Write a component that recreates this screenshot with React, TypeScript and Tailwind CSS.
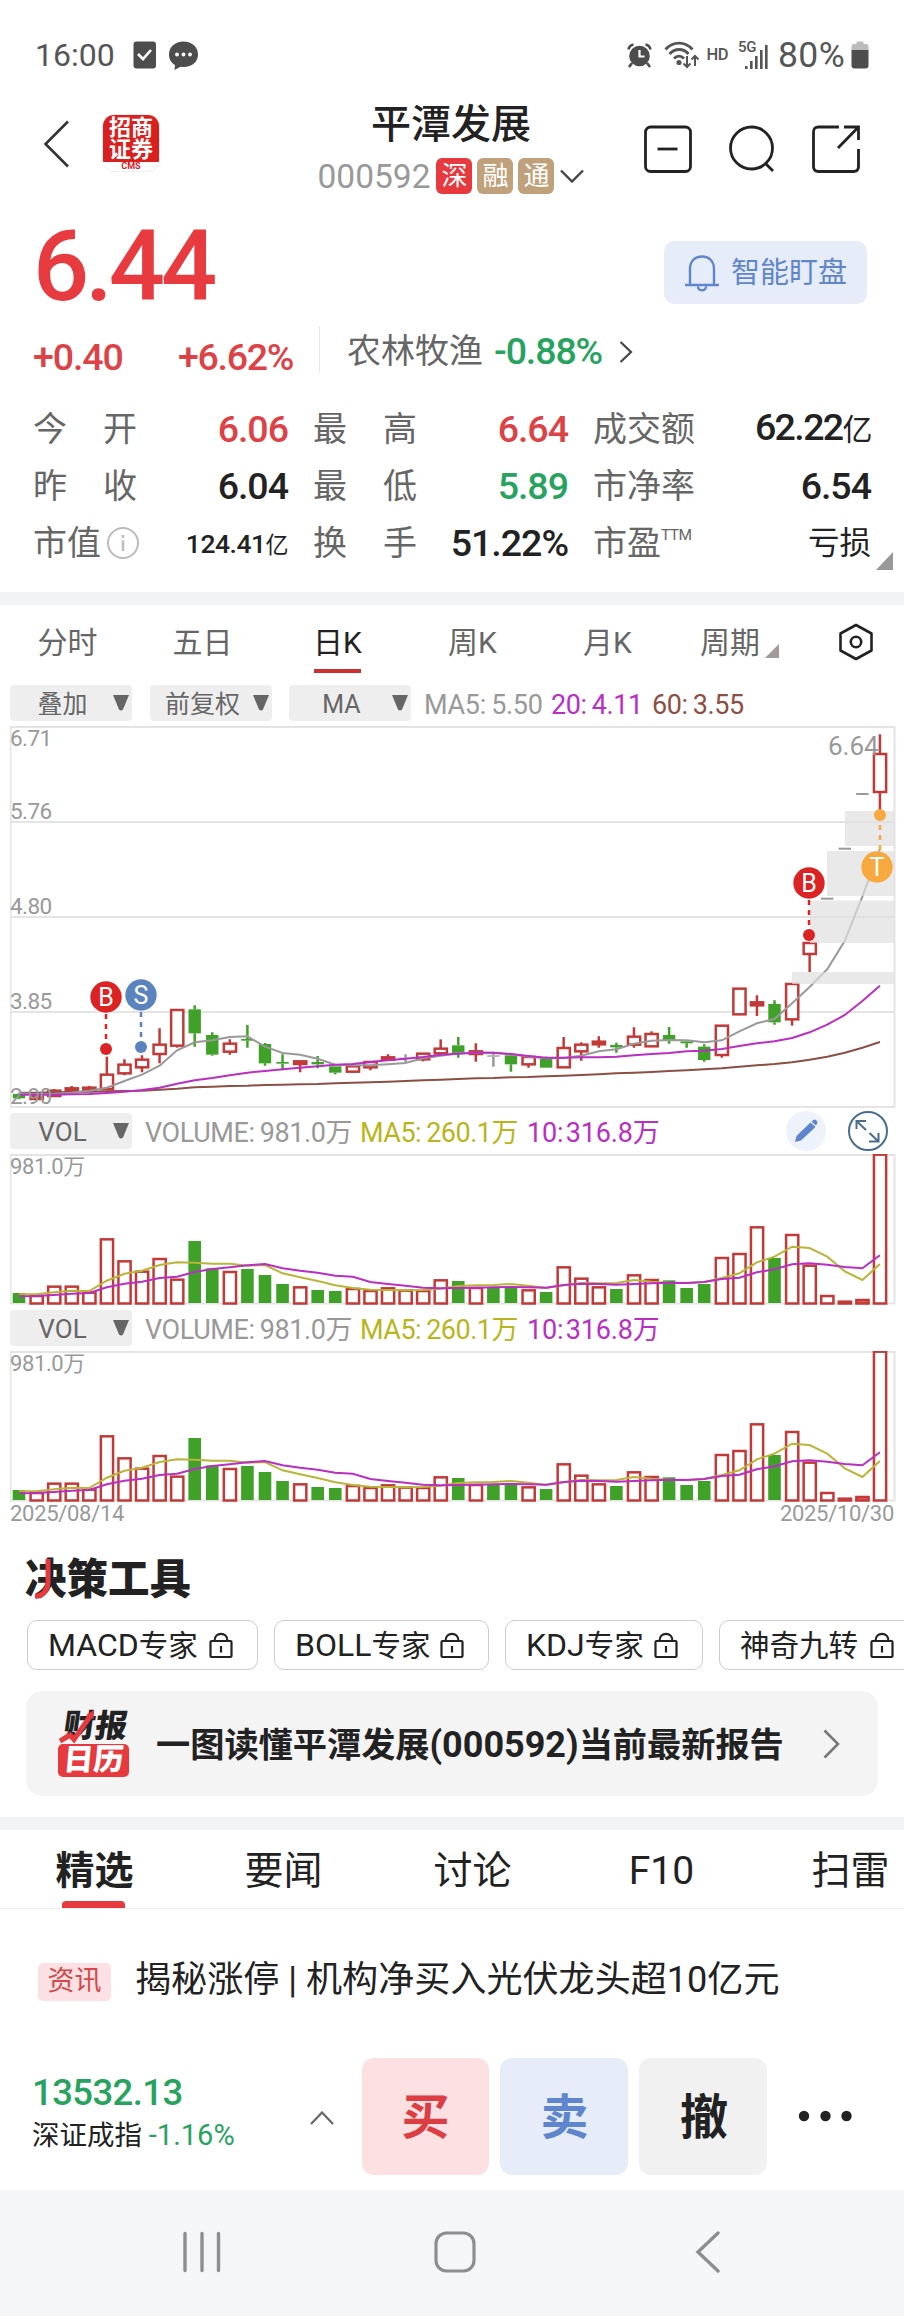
import type { ReactNode } from 'react';

type Kind = 'up' | 'down' | 'flat';

// kind, high, body top, body bottom, low: y offsets inside the K-line pane, in thirds of a pixel
const CANDLES: [Kind, number, number, number, number][] = [
  ['down', 1120, 1122, 1135, 1138],
  ['up', 1128, 1129, 1137, 1138],
  ['up', 1107, 1112, 1128, 1128],
  ['up', 1098, 1105, 1116, 1117],
  ['up', 1098, 1103, 1112, 1113],
  ['up', 1010, 1064, 1107, 1107],
  ['up', 1018, 1034, 1060, 1066],
  ['up', 1006, 1019, 1042, 1057],
  ['up', 925, 974, 1002, 1030],
  ['up', 870, 870, 977, 983],
  ['down', 856, 868, 940, 980],
  ['down', 937, 945, 1004, 1007],
  ['up', 958, 971, 995, 1004],
  ['down', 915, 957, 962, 983],
  ['down', 969, 972, 1030, 1037],
  ['down', 1003, 1026, 1031, 1051],
  ['up', 1022, 1024, 1032, 1057],
  ['down', 1008, 1026, 1033, 1045],
  ['down', 1039, 1039, 1058, 1063],
  ['up', 1038, 1039, 1055, 1058],
  ['up', 1025, 1026, 1042, 1051],
  ['up', 1003, 1012, 1019, 1022],
  ['flat', 1003, 1013, 1017, 1026],
  ['up', 1001, 1001, 1018, 1024],
  ['up', 958, 986, 1000, 1000],
  ['down', 951, 976, 1000, 1013],
  ['up', 970, 994, 1002, 1025],
  ['flat', 1000, 1006, 1010, 1040],
  ['down', 1003, 1006, 1033, 1055],
  ['up', 1010, 1011, 1033, 1043],
  ['down', 1010, 1016, 1043, 1043],
  ['up', 951, 984, 1042, 1042],
  ['up', 967, 974, 994, 1022],
  ['up', 949, 965, 973, 983],
  ['down', 968, 975, 982, 998],
  ['up', 922, 950, 974, 983],
  ['up', 934, 942, 979, 979],
  ['down', 921, 945, 961, 971],
  ['down', 960, 964, 970, 983],
  ['down', 973, 980, 1020, 1025],
  ['up', 917, 917, 1005, 1013],
  ['up', 806, 806, 883, 883],
  ['up', 826, 847, 856, 888],
  ['down', 841, 852, 907, 914],
  ['up', 792, 792, 898, 917],
  ['up', 669, 669, 702, 756],
  ['flat', 533, 533, 539, 539],
  ['flat', 383, 383, 389, 389],
  ['flat', 219, 219, 225, 225],
  ['up', 43, 102, 216, 270],
];

const MA5 = [
  1120, 1122, 1121, 1118, 1112, 1103, 1083, 1064, 1037, 991, 967, 961, 951, 949, 980, 999, 1004, 1016, 1034, 1036,
  1036, 1033, 1029, 1015, 1007, 1000, 998, 998, 1003, 1010, 1015, 1014, 1007, 994, 988, 971, 962, 960, 961, 967,
  961, 934, 910, 897, 850, 801, 748, 662, 530, 387,
];
const MA20 = [
  1124, 1124, 1124, 1123, 1122, 1119, 1115, 1110, 1103, 1091, 1081, 1074, 1066, 1058, 1053, 1048, 1043, 1039, 1034, 1032,
  1026, 1021, 1016, 1011, 1004, 1001, 998, 998, 1002, 1008, 1013, 1013, 1012, 1012, 1010, 1006, 1002, 999, 994, 992,
  987, 978, 970, 964, 954, 937, 914, 885, 843, 797,
];
const MA60 = [
  1118, 1118, 1117, 1116, 1115, 1114, 1113, 1112, 1109, 1106, 1102, 1100, 1098, 1097, 1095, 1094, 1093, 1092, 1090, 1088,
  1087, 1085, 1083, 1081, 1079, 1077, 1075, 1074, 1072, 1071, 1069, 1067, 1065, 1063, 1060, 1058, 1056, 1053, 1051, 1048,
  1045, 1040, 1036, 1032, 1027, 1019, 1010, 998, 983, 966,
];

const VOL_TOPS = [
  579, 588, 560, 560, 578, 418, 484, 515, 477, 539, 423, 505, 516, 507, 525, 552, 562, 570, 573, 567,
  573, 565, 572, 573, 541, 543, 564, 564, 563, 571, 576, 502, 536, 562, 567, 526, 540, 541, 564, 552,
  474, 462, 382, 474, 405, 497, 588, 605, 600, 164,
];
const VOL_MA5 = [
  583, 583, 577, 572, 573, 542, 521, 512, 495, 487, 488, 491, 491, 497, 495, 520, 532, 543, 556, 564,
  569, 570, 571, 570, 566, 558, 556, 555, 552, 557, 564, 556, 549, 550, 549, 540, 545, 548, 549, 546,
  534, 520, 487, 470, 440, 444, 470, 514, 540, 492,
];
const VOL_MA10 = [
  589, 588, 585, 581, 579, 562, 551, 545, 534, 530, 516, 507, 502, 496, 492, 505, 512, 518, 527, 530,
  546, 552, 557, 563, 565, 564, 563, 562, 561, 562, 563, 555, 551, 552, 554, 552, 550, 548, 549, 546,
  537, 533, 517, 508, 493, 490, 494, 501, 505, 466,
];

const RED = '#c23a38';
const GREEN = '#3fa128';
const GRAY = '#999999';
const PURPLE = '#b92fc4';

const cx = (i: number) => 9 + i * 17.57;
const ky = (v: number) => v / 3 - 6;
const vy = (v: number) => v / 3 - 54;

function points(values: number[], y: (v: number) => number) {
  return values.map((v, i) => `${cx(i).toFixed(1)},${y(v).toFixed(1)}`).join(' ');
}

function StatusBar() {
  return (
    <div className="flex h-[88px] items-end pb-3.5 pl-[35px] pr-[35px] text-[32px] text-[#555]">
      <span className="h-[38px] leading-[38px]">16:00</span>
      <svg className="mb-[5px] ml-[18px]" width="24" height="28" viewBox="0 0 24 28">
        <rect x="0.5" y="0.5" width="22.500" height="27" rx="3" fill="#4d4d4d" />
        <path d="M5 13l5 5 8-9" fill="none" stroke="#fff" strokeWidth="2.600" />
      </svg>
      <svg className="mb-[3px] ml-[11px]" width="31" height="30" viewBox="0 0 31 30">
        <path d="M15.500 0.500C7 0.500 1 6 1 13.500c0 5 2.500 8.500 6 10.500l-.5 5 6-3.200 3 .2c8.500 0 14.500-5 14.500-12.500S24 .5 15.500.5z" fill="#4d4d4d" />
        <circle cx="9" cy="13.500" r="1.900" fill="#fff" />
        <circle cx="15.500" cy="13.500" r="1.900" fill="#fff" />
        <circle cx="22" cy="13.500" r="1.900" fill="#fff" />
      </svg>
      <div className="flex-1" />
      <svg className="mb-[6px]" width="25" height="25" viewBox="0 0 25 25">
        <circle cx="12.500" cy="13" r="10.300" fill="#4d4d4d" />
        <path d="M1.500 6.500C2 4 4 2 6.500 1.500M23.500 6.500C23 4 21 2 18.500 1.500M5 20l-3 4M20 20l3 4" stroke="#4d4d4d" strokeWidth="2.600" fill="none" />
        <path d="M12.500 7v6.500h5" stroke="#fff" strokeWidth="2.200" fill="none" />
      </svg>
      <svg className="mb-[5px] ml-3" width="36" height="28" viewBox="0 0 36 28" fill="none" stroke="#555" strokeWidth="2.800">
        <path d="M1.500 8.500C9 0 21 0 28.500 8.500M5.500 13c5.500-6 14-6 19 0M10 17.500c3-3.300 7-3.300 10 0" />
        <circle cx="15" cy="21.500" r="1.200" fill="#555" />
        <path d="M23 15v11M19.500 22.500L23 26l3.500-3.500M31 25V15M27.500 18.500L31 15l3.500 3.500" strokeWidth="2" />
      </svg>
      <span className="mb-[7px] ml-[7px] h-6 text-[16.500px] font-medium leading-6 tracking-[-0.5px]">HD</span>
      <div className="relative ml-[10px] h-[46px] w-[34px]">
        <span className="absolute left-0 top-[9px] text-[15px] font-medium leading-5 tracking-tight">5G</span>
        <svg className="absolute left-[7px] top-[17px]" width="24" height="26" viewBox="0 0 24 26" fill="#555">
          <rect x="0" y="21" width="2.600" height="3" />
          <rect x="5" y="16" width="2.600" height="8" />
          <rect x="10" y="11" width="2.600" height="13" />
          <rect x="15" y="5" width="2.600" height="19" />
          <rect x="20" y="0" width="2.600" height="24" />
        </svg>
      </div>
      <span className="ml-[6px] h-[38px] w-[71px] text-[35.500px] leading-[38px] tracking-[0.4px]">80%</span>
      <svg className="mb-[5px] ml-[2px]" width="18" height="28" viewBox="0 0 18 28">
        <path d="M5.500 3V1.500Q5.500.5 6.500.5h5q1 0 1 1V3h2.500q2.500 0 2.500 2.500V10H.5V5.500Q.5 3 3 3z" fill="#bbb" />
        <path d="M.5 9h17v15.500q0 3-3 3h-11q-3 0-3-3z" fill="#4d4d4d" />
      </svg>
    </div>
  );
}

function Header() {
  return (
    <div className="flex h-[117px] items-start pl-[43px] pr-[44px]">
      <div className="flex w-[274px] pt-[26px]">
        <svg className="mt-1.5" width="27" height="48" viewBox="0 0 27 48" fill="none" stroke="#333" strokeWidth="2.600">
          <path d="M25 1.500L2.500 24 25 46.500" />
        </svg>
        <div className="ml-8 flex h-[58px] w-[58px] flex-col overflow-hidden rounded-xl border border-[#eee] bg-white">
          <div className="h-[47px] bg-[#d9201f] pt-[2px] text-center text-[22px] font-bold leading-[21.500px] text-white">
            招商
            <br />
            证券
          </div>
          <div className="text-center text-[9px] font-bold leading-[9px] text-[#d9201f]">CMS</div>
        </div>
      </div>
      <div className="flex w-[268px] flex-col items-center pt-[14px]">
        <div className="h-[46px] text-[40px] font-medium leading-[46px] text-[#222]">平潭发展</div>
        <div className="mt-[10px] flex h-9 items-center">
          <span className="mr-[6px] mt-[2px] text-[33.500px] leading-9 text-[#999]">000592</span>
          <Tag className="bg-[#e63a3f]">深</Tag>
          <Tag className="ml-[5px] bg-[#bfa27c]">融</Tag>
          <Tag className="ml-[5px] bg-[#bfa27c]">通</Tag>
          <svg className="ml-1.5" width="24" height="14" viewBox="0 0 24 14" fill="none" stroke="#444" strokeWidth="2.400">
            <path d="M1 1.500l11 11 11-11" />
          </svg>
        </div>
      </div>
      <div className="ml-auto flex gap-[36px] pt-[37px]">
        <svg width="48" height="48" viewBox="0 0 48 48" fill="none" stroke="#222" strokeWidth="2.800">
          <rect x="1.500" y="2" width="45" height="44.500" rx="5" />
          <path d="M13.500 24h20" />
        </svg>
        <svg width="48" height="48" viewBox="0 0 48 48" fill="none" stroke="#222" strokeWidth="2.800">
          <circle cx="23.500" cy="23" r="21" />
          <path d="M37 38l8 8" />
        </svg>
        <svg width="48" height="48" viewBox="0 0 48 48" fill="none" stroke="#222" strokeWidth="2.800">
          <path d="M27 2H6.500Q1.500 2 1.500 7v34.500q0 5 5 5h35q5 0 5-5V24M32 2h14.500v13M46 2.500L26 23" />
        </svg>
      </div>
    </div>
  );
}

function Tag({ className, children }: { className: string; children: ReactNode }) {
  return (
    <span className={`flex h-9 w-9 items-center justify-center rounded-md text-[26px] leading-9 text-white ${className}`}>
      {children}
    </span>
  );
}

function Price() {
  return (
    <>
      <div className="flex h-[114px] items-start justify-between pl-[33px] pr-[37px]">
        <div className="pt-[3px] text-[99px] font-medium leading-[116px] tracking-[-4px] text-[#e83b40]">6.44</div>
        <div className="mt-9 flex h-[63px] w-[203px] items-center rounded-[10px] bg-[#e6edf9] pl-[20px] text-[#5f85cc]">
          <svg width="36" height="38" viewBox="0 0 36 38" fill="none" stroke="#5f85cc" strokeWidth="2.400">
            <path d="M6 31V15C6 7 11 2.500 18 2.500S30 7 30 15v16M1 31h34M14 32.500c0 5 8 5 8 0" />
          </svg>
          <span className="ml-[11px] text-[29px] leading-[40px]">智能盯盘</span>
        </div>
      </div>
      <div className="flex h-[80px] items-start pl-[33px] text-[37.500px] leading-[42px]">
        <span className="mt-[17px] w-[145px] font-medium tracking-[-1.1px] text-[#dc4246]">+0.40</span>
        <span className="mt-[17px] w-[141px] font-medium tracking-[-1.3px] text-[#dc4246]">+6.62%</span>
        <span className="mt-[7px] h-[47px] w-px bg-[#eaeaea]" />
        <span className="ml-[27px] mt-[11px] text-[34px] text-[#666]">农林牧渔</span>
        <span className="ml-[11px] mt-[11px] w-[111px] font-medium tracking-[-1.1px] text-[#27a35f]">-0.88%</span>
        <svg className="ml-[14px] mt-[22px]" width="14" height="22" viewBox="0 0 14 22" fill="none" stroke="#444" strokeWidth="2.200">
          <path d="M1.500 1l10.500 10L1.500 21" />
        </svg>
      </div>
    </>
  );
}

function Stat({ label, children, className = '' }: { label: ReactNode; children: ReactNode; className?: string }) {
  return (
    <div className="flex h-[57px] items-center justify-between whitespace-nowrap">
      <span className="flex items-center text-[34px] leading-[50px] text-[#666]">{label}</span>
      <span className={`text-[37.500px] font-medium leading-[50px] tracking-[-1px] ${className}`}>{children}</span>
    </div>
  );
}

const wide = (a: string, b: string) => (
  <>
    <span className="w-[70px]">{a}</span>
    <span>{b}</span>
  </>
);

function Stats() {
  return (
    <div className="relative h-[193px] pl-[33px] pr-[33px] pt-[1px]">
      <div className="grid grid-cols-[255px_255px_278px] gap-x-[25px]">
        <Stat label={wide('今', '开')} className="text-[#dc4246]">6.06</Stat>
        <Stat label={wide('最', '高')} className="text-[#dc4246]">6.64</Stat>
        <Stat label="成交额" className="text-[#222]"><span className="tracking-[-1.600px]">62.22<span className="text-[30px] font-normal">亿</span></span></Stat>
        <Stat label={wide('昨', '收')} className="text-[#222]">6.04</Stat>
        <Stat label={wide('最', '低')} className="text-[#27a35f]">5.89</Stat>
        <Stat label="市净率" className="text-[#222]">6.54</Stat>
        <Stat
          label={
            <>
              市值
              <svg className="ml-[5px]" width="34" height="34" viewBox="0 0 34 34" fill="none" stroke="#bbb" strokeWidth="2">
                <circle cx="17" cy="17" r="15" />
                <path d="M17 14.500V25M17 9v3" strokeWidth="2.400" />
              </svg>
            </>
          }
          className="text-[#222]"
        >
          <span className="text-[26.500px] tracking-[-0.5px]">124.41<span className="text-[23px] font-normal">亿</span></span>
        </Stat>
        <Stat label={wide('换', '手')} className="text-[#222]">51.22%</Stat>
        <Stat label={<>市盈<span className="mb-4 text-[15.500px] leading-4 tracking-[-0.6px]">TTM</span></>} className="text-[#222]">
          <span className="text-[31.500px] font-normal tracking-normal">亏损</span>
        </Stat>
      </div>
      <svg className="absolute right-[11px] top-[153px]" width="17" height="18" viewBox="0 0 17 18">
        <path d="M17 0v18H0z" fill="#999" />
      </svg>
    </div>
  );
}

function PeriodTabs() {
  return (
    <div className="flex h-[79px] text-[30px] leading-[76px] text-[#666]">
      {['分时', '五日', '日K', '周K', '月K'].map((name) => (
        <div key={name} className="relative w-[135px] text-center">
          {name === '日K' ? (
            <>
              <span className="text-[#222]">{name}</span>
              <span className="absolute bottom-[11px] left-[44px] h-1 w-[47px] bg-[#cc3031]" />
            </>
          ) : (
            name
          )}
        </div>
      ))}
      <div className="flex w-[135px] pl-[25px]">
        周期
        <svg className="ml-[5px] mt-[39px]" width="14" height="14" viewBox="0 0 14 14">
          <path d="M14 0v14H0z" fill="#a09a9a" />
        </svg>
      </div>
      <svg className="ml-[28px] mt-[18px]" width="36" height="38" viewBox="0 0 36 38" fill="none" stroke="#222" strokeWidth="2.600">
        <path d="M18 2l15.500 8.500v17L18 36 2.500 27.500v-17z" strokeLinejoin="round" />
        <circle cx="18" cy="19" r="5.200" />
      </svg>
    </div>
  );
}

function Dropdown({ children }: { children: ReactNode }) {
  return (
    <div className="flex h-9 w-[122px] shrink-0 items-center rounded bg-[#eee] text-[25px] leading-9 text-[#666]">
      <span className="flex-1 pl-[2px] pt-[3px] text-center">{children}</span>
      <svg className="mr-[3px]" width="16" height="16" viewBox="0 0 16 16">
        <path d="M0 0h16L10 14.500q-2 2-4 0z" fill="#666" />
      </svg>
    </div>
  );
}

function Marker({ x, y, dotY, letter, color, dotX = x }: { x: number; y: number; dotY: number; letter: string; color: string; dotX?: number }) {
  return (
    <g>
      <line x1={dotX} y1={y + (dotY > y ? 17 : -17)} x2={dotX} y2={dotY} stroke={color} strokeWidth="2.500" strokeDasharray="5 5" />
      <circle cx={dotX} cy={dotY} r="6" fill={color} />
      <circle cx={x} cy={y} r="15.700" fill={color} />
      <text x={x} y={y + 9} textAnchor="middle" fontSize="25" fill="#fff">
        {letter}
      </text>
    </g>
  );
}

function KLineChart() {
  return (
    <svg className="ml-[10px] mt-[5px] block" width="886" height="382" viewBox="0 0 886 382">
      <g stroke="#e4e4e4" strokeWidth="2" fill="none">
        <rect x="0.500" y="1" width="884" height="380" />
        <path d="M0 96h884M0 191h884M0 286h884" />
      </g>
      {CANDLES.map(([kind, high, top, bottom, low], i) => {
        const color = kind === 'up' ? RED : kind === 'down' ? GREEN : GRAY;
        const hollow = kind === 'up';
        return (
          <g key={i} stroke={color} strokeWidth="2.500">
            <path d={`M${cx(i)} ${ky(high)}V${ky(top)}M${cx(i)} ${ky(bottom)}V${ky(low)}`} />
            {hollow ? (
              <rect x={cx(i) - 6} y={ky(top)} width="12.200" height={ky(bottom) - ky(top)} fill={bottom - top < 12 ? RED : '#fff'} />
            ) : (
              <rect x={cx(i) - 6.2} y={ky(top)} width="12.400" height={ky(bottom) - ky(top)} fill={color} stroke="none" />
            )}
          </g>
        );
      })}
      <g fill="none" strokeWidth="2">
        <polyline points={points(MA60, ky)} stroke="#8c4f44" />
        <polyline points={points(MA5, ky)} stroke={GRAY} />
        <polyline points={points(MA20, ky)} stroke={PURPLE} />
      </g>
      <g fill="#e0e0e0" opacity="0.700">
        <rect x="782" y="246" width="102" height="12" />
        <rect x="800" y="174.500" width="84" height="42.500" />
        <rect x="817" y="125" width="67" height="45" />
        <rect x="835" y="85" width="49" height="35" />
      </g>
      <Marker x={96} y={271} dotY={323} letter="B" color="#dc2323" />
      <Marker x={131} y={269} dotY={321} letter="S" color="#5b84bf" />
      <Marker x={799} y={157} dotY={209} letter="B" color="#dc2323" />
      <Marker x={867} y={141} dotX={870} dotY={89} letter="T" color="#f7a93f" />
      <g fill="#999" fontSize="22.500" letterSpacing="-0.600">
        <text x="0" y="20">6.71</text>
        <text x="0" y="93">5.76</text>
        <text x="0" y="188">4.80</text>
        <text x="0" y="283">3.85</text>
        <text x="0" y="378">2.90</text>
        <text x="818" y="28.500" fontSize="26" letterSpacing="0">6.64</text>
      </g>
    </svg>
  );
}

function VolumeLegend({ tools }: { tools?: boolean }) {
  return (
    <div className="ml-[10px] flex h-9 items-center whitespace-nowrap text-[27px] leading-9">
      <Dropdown>
        <span className="text-[26px]">VOL</span>
      </Dropdown>
      <span className="ml-[13px] w-[215px] pt-[3px] tracking-[-0.4px] text-[#999]">VOLUME:&#8201;981.0万</span>
      <span className="w-[167px] pt-[3px] tracking-[-0.5px] text-[#b9b51c]">MA5:&#8201;260.1万</span>
      <span className="w-[153px] pt-[3px] tracking-[-0.2px] text-[#b92fc4]">10:&#8202;316.8万</span>
      {tools && (
        <>
          <svg className="ml-[106px]" width="40" height="40" viewBox="0 0 40 40">
            <circle cx="20" cy="20" r="20" fill="#edf2fb" />
            <path d="M9 31l1.500-6L24.500 11.500l5 4.500L15 29.500zM25.500 10.500l2-1.500q1.500-1 3 .5t.8 3l-1.500 2z" fill="#5f85cc" />
          </svg>
          <svg className="ml-[22px]" width="40" height="40" viewBox="0 0 40 40" fill="none" stroke="#4a6d8f" strokeWidth="2">
            <circle cx="20" cy="20" r="19" />
            <path d="M8.500 18v-8h9.500M9 10.500l9 8.500M30.500 22v8.500H21M30.500 30.500L21.500 22" />
          </svg>
        </>
      )}
    </div>
  );
}

function VolumeChart() {
  return (
    <svg className="ml-[10px] block" width="886" height="151" viewBox="0 0 886 151">
      <rect x="0.500" y="1" width="884" height="148.500" fill="none" stroke="#e4e4e4" strokeWidth="2" />
      {VOL_TOPS.map((top, i) => {
        const y = vy(top);
        if (CANDLES[i][0] === 'down' || i === 27) {
          return <rect key={i} x={cx(i) - 6.3} y={y} width="12.600" height={149 - y} fill={GREEN} />;
        }
        return (
          <rect key={i} x={cx(i) - 6} y={y} width="12.200" height={149.5 - y} fill={top > 595 ? '#e0605e' : '#fff'} stroke={RED} strokeWidth="2.500" />
        );
      })}
      <g fill="none" strokeWidth="2">
        <polyline points={points(VOL_MA5, vy)} stroke="#b9b53a" />
        <polyline points={points(VOL_MA10, vy)} stroke={PURPLE} />
      </g>
      <text x="0" y="20" fontSize="22" fill="#999" letterSpacing="-0.400">
        981.0万
      </text>
    </svg>
  );
}

function Chip({ latin, children, className }: { latin?: string; children: ReactNode; className: string }) {
  return (
    <div className={`flex h-[50px] shrink-0 items-center rounded-[10px] border border-[#ccc] pl-[20px] text-[29.500px] leading-[52px] text-[#222] ${className}`}>
      <span className="whitespace-nowrap">
        <span className="text-[32px]">{latin}</span>
        {children}
      </span>
      <svg className="ml-auto" width="24" height="27" viewBox="0 0 24 27" fill="none" stroke="#222" strokeWidth="2.200">
        <rect x="1.500" y="9" width="21" height="16" rx="1" />
        <path d="M5.500 9C5.500-.5 18.500-.5 18.500 9M12 14v6.500" />
      </svg>
    </div>
  );
}

function DecisionTools() {
  return (
    <div className="h-[294px] pt-[33px]">
      <div className="relative ml-[25px] h-[48px] text-[41.500px] font-black leading-[48px] text-[#222]">
        决策工具
        <svg className="absolute left-[9px] top-[3px]" width="18" height="41" viewBox="0 0 18 41" fill="none" stroke="#e63a3f" strokeWidth="5">
          <path d="M14 0v24Q13 36 1 37.500" />
        </svg>
      </div>
      <div className="mt-[16px] flex gap-4 overflow-hidden pl-[27px]">
        <Chip className="w-[231px] pr-[24px]" latin="MACD">专家</Chip>
        <Chip className="w-[215px] pr-[24px]" latin="BOLL">专家</Chip>
        <Chip className="w-[198px] pr-[24px]" latin="KDJ">专家</Chip>
        <Chip className="w-[196px] pr-[20px]">神奇九转</Chip>
      </div>
      <div className="ml-[26px] mt-[21px] flex h-[105px] w-[852px] items-center rounded-2xl bg-[#f4f4f4] pl-8">
        <div className="w-[71px] text-center font-black">
          <div className="relative h-[34px] text-[32px] leading-[32px] text-[#222]">
            <span className="block -skew-x-[8deg] pl-1">财报</span>
            <svg className="absolute left-[1px] top-[0px]" width="38" height="34" viewBox="0 0 38 34" fill="none" stroke="#e63a3f" strokeWidth="5">
              <path d="M1 31l10-6 4 4.500L32 5" />
              <path d="M27 5l8-5-.5 9z" fill="#e63a3f" stroke="none" />
            </svg>
          </div>
          <div className="h-[33px] rounded-[5px] bg-[#e63a3f] text-[30px] leading-[32px] text-white">
            <span className="block -skew-x-[5deg]">日历</span>
          </div>
        </div>
        <span className="ml-[27px] w-[630px] whitespace-nowrap pt-0.5 text-[34.200px] font-bold leading-[48px] text-[#222]">
          一图读懂平潭发展<span className="text-[36px]">(000592)</span>当前最新报告
        </span>
        <svg className="ml-[37px]" width="18" height="30" viewBox="0 0 18 30" fill="none" stroke="#777" strokeWidth="2.600">
          <path d="M1.500 1.500L15 15 1.500 28.500" />
        </svg>
      </div>
    </div>
  );
}

function News() {
  return (
    <>
      <div className="flex h-[79px] overflow-hidden border-b border-[#eee] text-[39px] leading-[82px] text-[#222]">
        <div className="relative w-[189px] shrink-0 text-center font-bold">
          精选
          <span className="absolute bottom-0 left-[62px] h-[7px] w-[63px] rounded-t bg-[#e63a3f]" />
        </div>
        {['要闻', '讨论', 'F10', '扫雷'].map((name) => (
          <div key={name} className="w-[189px] shrink-0 text-center">{name}</div>
        ))}
      </div>
      <div className="flex h-[149px] items-start pl-[38px]">
        <span className="mt-[54px] h-[38px] w-[73px] rounded-[5px] bg-[#fbe1e3] text-center text-[27px] leading-[37px] text-[#d5484b]">资讯</span>
        <span className="ml-[24px] mt-[47px] text-[36.100px] leading-[48px] text-[#222]">揭秘涨停 | 机构净买入光伏龙头超10亿元</span>
      </div>
    </>
  );
}

function TradeBar() {
  return (
    <div className="flex h-[132px] pl-[32px]">
      <div className="w-[278px] pt-[15px]">
        <div className="text-[36.500px] font-medium leading-[40px] tracking-[-0.6px] text-[#27a35f]">13532.13</div>
        <div className="mt-[2px] whitespace-nowrap text-[27.500px] leading-[40px] text-[#222]">
          深证成指 <span className="text-[29px] text-[#27a35f]">-1.16%</span>
        </div>
      </div>
      <svg className="mt-[53px]" width="24" height="14" viewBox="0 0 24 14" fill="none" stroke="#666" strokeWidth="2.200">
        <path d="M1 13L12 1.500 23 13" />
      </svg>
      <div className="ml-[28px] flex gap-[11px] text-center text-[48px] font-bold leading-[120px]">
        <div className="h-[117px] w-[127px] rounded-xl bg-[#fce0e2] text-[#dc3f43]">买</div>
        <div className="h-[117px] w-[128px] rounded-xl bg-[#e6edf9] pl-px text-[#5f85cc]">卖</div>
        <div className="h-[117px] w-[128px] rounded-xl bg-[#f1f1f1] pl-0.5 text-[#222]">撤</div>
      </div>
      <svg className="ml-[31px] mt-[52px]" width="56" height="12" viewBox="0 0 56 12" fill="#222">
        <circle cx="6" cy="6" r="5.200" />
        <circle cx="27.500" cy="6" r="5.200" />
        <circle cx="48.500" cy="6" r="5.200" />
      </svg>
    </div>
  );
}

function SystemNav() {
  return (
    <div className="flex h-[126px] items-center bg-[#f5f6f8] pb-0.5 pl-[183px]">
      <svg width="38" height="42" viewBox="0 0 38 42" stroke="#8e8e8e" strokeWidth="3.400" strokeLinecap="round">
        <path d="M2 2.500v37M19 2.500v37M35.500 2.500v37" />
      </svg>
      <svg className="ml-[213px]" width="42" height="42" viewBox="0 0 42 42" fill="none" stroke="#8e8e8e" strokeWidth="3.200">
        <rect x="2" y="2" width="38" height="38" rx="10.500" />
      </svg>
      <svg className="ml-[219px]" width="26" height="42" viewBox="0 0 26 42" fill="none" stroke="#8e8e8e" strokeWidth="3.400" strokeLinecap="round">
        <path d="M23 2L3 21l20 19" />
      </svg>
    </div>
  );
}

export default function App() {
  return (
    <div lang="zh-CN" className="h-[2316px] w-[904px] overflow-hidden bg-white font-['Roboto','Noto_Sans_CJK_SC',sans-serif]">
      <StatusBar />
      <Header />
      <Price />
      <Stats />
      <div className="h-[13px] bg-[#f2f3f5]" />
      <PeriodTabs />
      <div className="ml-[10px] mt-px flex h-9 items-center whitespace-nowrap text-[27px] leading-9">
        <Dropdown>叠加</Dropdown>
        <div className="ml-[18px]">
          <Dropdown>前复权</Dropdown>
        </div>
        <div className="ml-[17px]">
          <Dropdown>MA</Dropdown>
        </div>
        <span className="ml-[13px] w-[127px] pt-[3px] tracking-[-0.3px] text-[#999]">MA5:&#8201;5.50</span>
        <span className="w-[101px] pt-[3px] tracking-[-0.4px] text-[#b92fc4]">20:&#8201;4.11</span>
        <span className="pt-[3px] tracking-[-0.4px] text-[#8c4f44]">60:&#8201;3.55</span>
      </div>
      <KLineChart />
      <div className="mt-[5px]">
        <VolumeLegend tools />
      </div>
      <div className="mt-[5px]">
        <VolumeChart />
      </div>
      <div className="mt-[5px]">
        <VolumeLegend />
      </div>
      <div className="mt-[5px]">
        <VolumeChart />
      </div>
      <div className="flex h-[21px] justify-between px-[10px] text-[22px] leading-[24px] tracking-[-0.3px] text-[#999]">
        <span>2025/08/14</span>
        <span>2025/10/30</span>
      </div>
      <DecisionTools />
      <div className="h-[13px] bg-[#f2f3f5]" />
      <News />
      <TradeBar />
      <SystemNav />
    </div>
  );
}
